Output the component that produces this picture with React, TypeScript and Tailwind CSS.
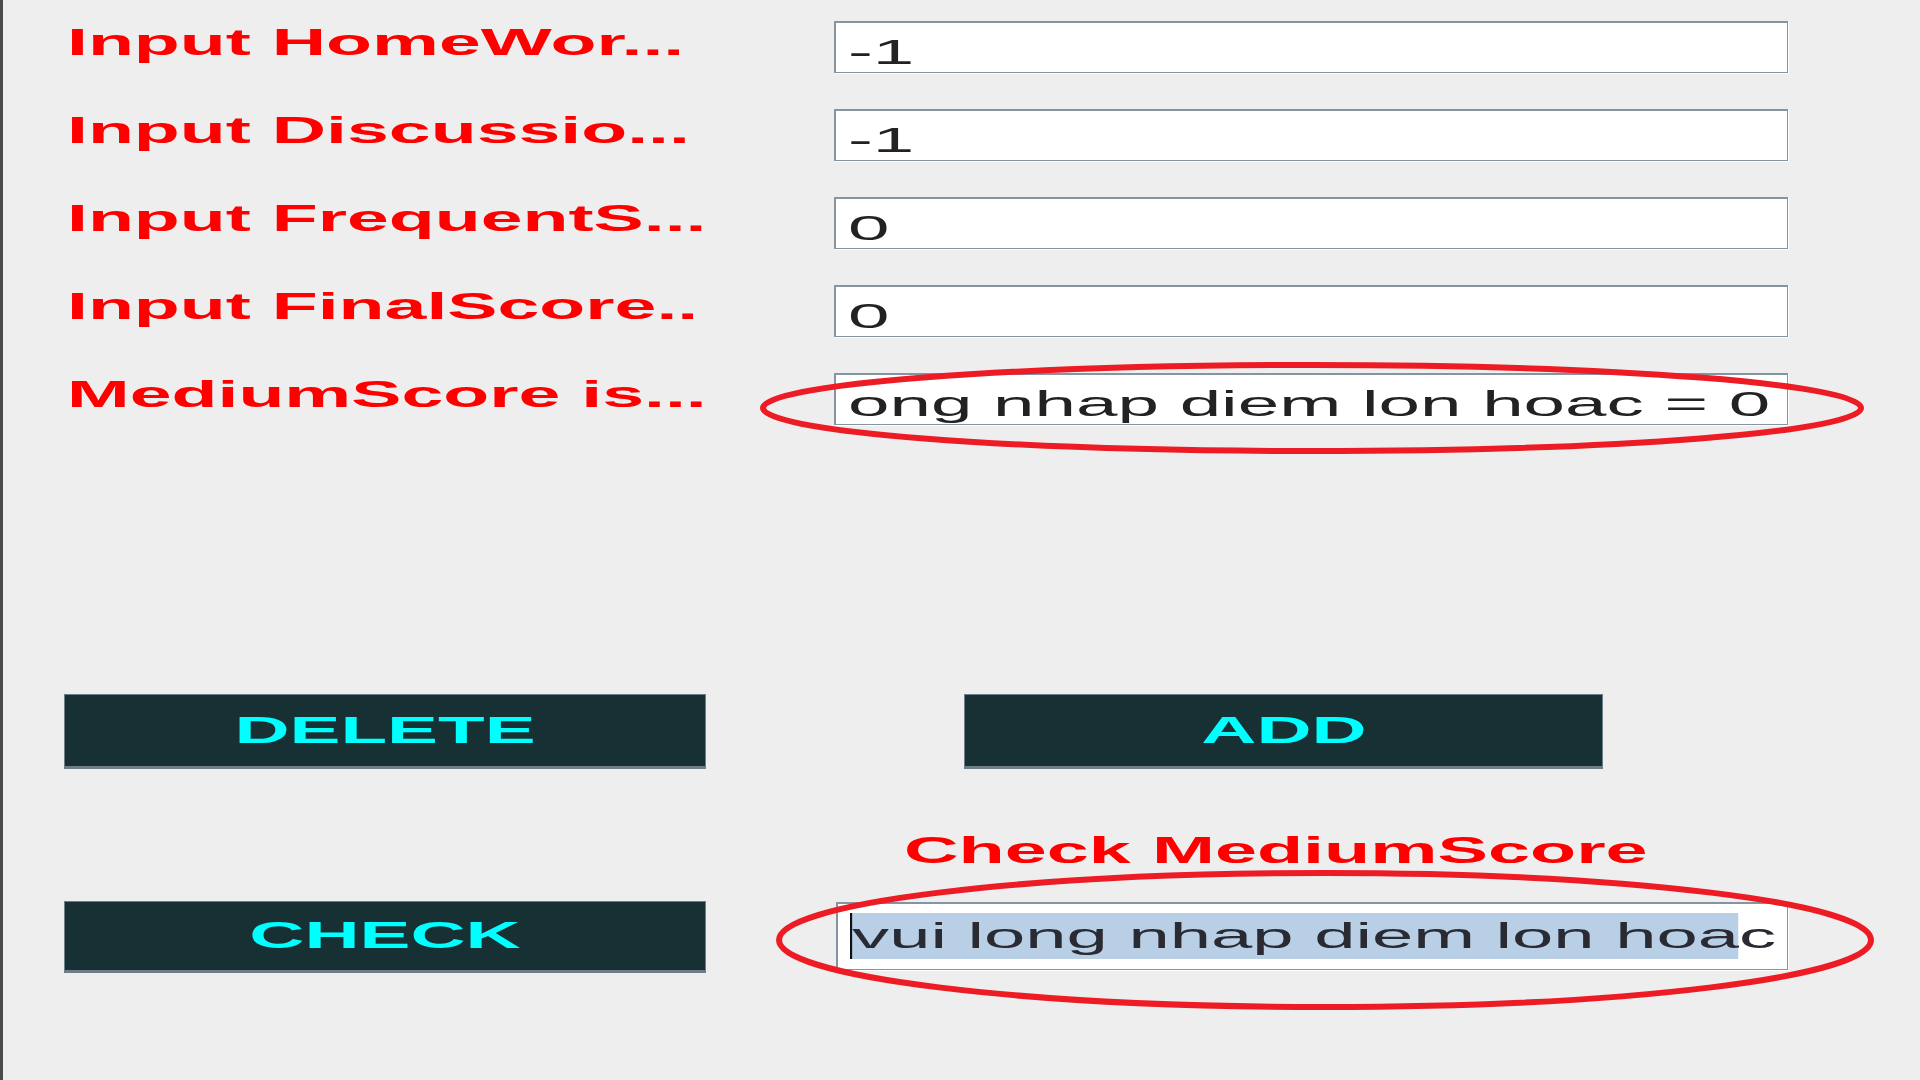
import React from 'react';

const rows = [
  { label: 'Input HomeWor...', value: '-1' },
  { label: 'Input Discussio...', value: '-1' },
  { label: 'Input FrequentS...', value: '0' },
  { label: 'Input FinalScore..', value: '0' },
  { label: 'MediumScore is...', value: 'ong nhap diem lon hoac = 0' },
];

const Label = ({ text }: { text: string }) => (
  <span className="inline-block origin-left scale-x-[2.09] whitespace-pre text-[36px] font-bold leading-[36px] text-[#ff0000]">
    {text}
  </span>
);

const Field = ({ value }: { value: string }) => (
  <div className="h-[52px] w-[954px] overflow-hidden border-2 border-r border-b border-[#8494a3] bg-white pl-[12px] pt-[11px] shadow-[1px_1px_0_#ffffff]">
    <span className="inline-block origin-left scale-x-[2.13] whitespace-pre text-[35px] leading-[36px] text-[#222]">
      {value}
    </span>
  </div>
);

const DarkButton = ({ text, className }: { text: string; className: string }) => (
  <div
    className={`flex items-center justify-center border border-b-[3px] border-[#6f7d89] bg-[#163033] ${className}`}
  >
    <span className="inline-block scale-x-[2.12] text-[36px] font-bold leading-[36px] text-[#00ffff]">{text}</span>
  </div>
);

export default function App() {
  return (
    <div className="relative h-[1080px] w-[1920px] overflow-hidden bg-[#eeeeee] font-['Liberation_Sans',Arial,sans-serif]">
      <div className="h-full border-l-[3px] border-[#4b4b4b] pt-[21px]">
        {/* input rows */}
        <div className="flex flex-col gap-[36px]">
          {rows.map((r) => (
            <div key={r.label} className="flex h-[52px] items-center">
              <div className="mb-[7px] w-[831px] pl-[64px]">
                <Label text={r.label} />
              </div>
              <Field value={r.value} />
            </div>
          ))}
        </div>

        {/* DELETE / ADD */}
        <div className="mt-[269px] flex pl-[61px]">
          <DarkButton text="DELETE" className="h-[75px] w-[642px]" />
          <DarkButton text="ADD" className="ml-[258px] h-[75px] w-[639px]" />
        </div>

        <div className="mt-[64px] h-[36px] pl-[901px]">
          <span className="inline-block origin-left scale-x-[2.1] whitespace-pre text-[36px] font-bold leading-[36px] text-[#ff0000]">
            Check MediumScore
          </span>
        </div>

        {/* CHECK + result */}
        <div className="mt-[32px] flex items-start pl-[61px]">
          <DarkButton text="CHECK" className="h-[72px] w-[642px]" />
          <div className="ml-[130px] mt-[1px] h-[68px] w-[952px] overflow-hidden border-2 border-r border-b border-[#8494a3] bg-white pl-[12px] pt-[9px] shadow-[1px_1px_0_#ffffff]">
            <span className="inline-block origin-left scale-x-[2.12] whitespace-pre text-[35px] leading-[46px] text-[#2a2a33]">
              <span className="inline-block border-l border-[#111] bg-[#b8cfe6] leading-[46px]">vui long nhap diem lon hoa</span>
              <span>c</span>
            </span>
          </div>
        </div>
      </div>

      {/* red annotation ovals */}
      <svg className="pointer-events-none absolute left-0 top-0" width="1920" height="1080" viewBox="0 0 1920 1080">
        <ellipse cx="1312" cy="408" rx="549" ry="43" fill="none" stroke="#ed1c24" strokeWidth="6" />
        <ellipse cx="1325" cy="940" rx="546" ry="67" fill="none" stroke="#ed1c24" strokeWidth="6" />
      </svg>
    </div>
  );
}
